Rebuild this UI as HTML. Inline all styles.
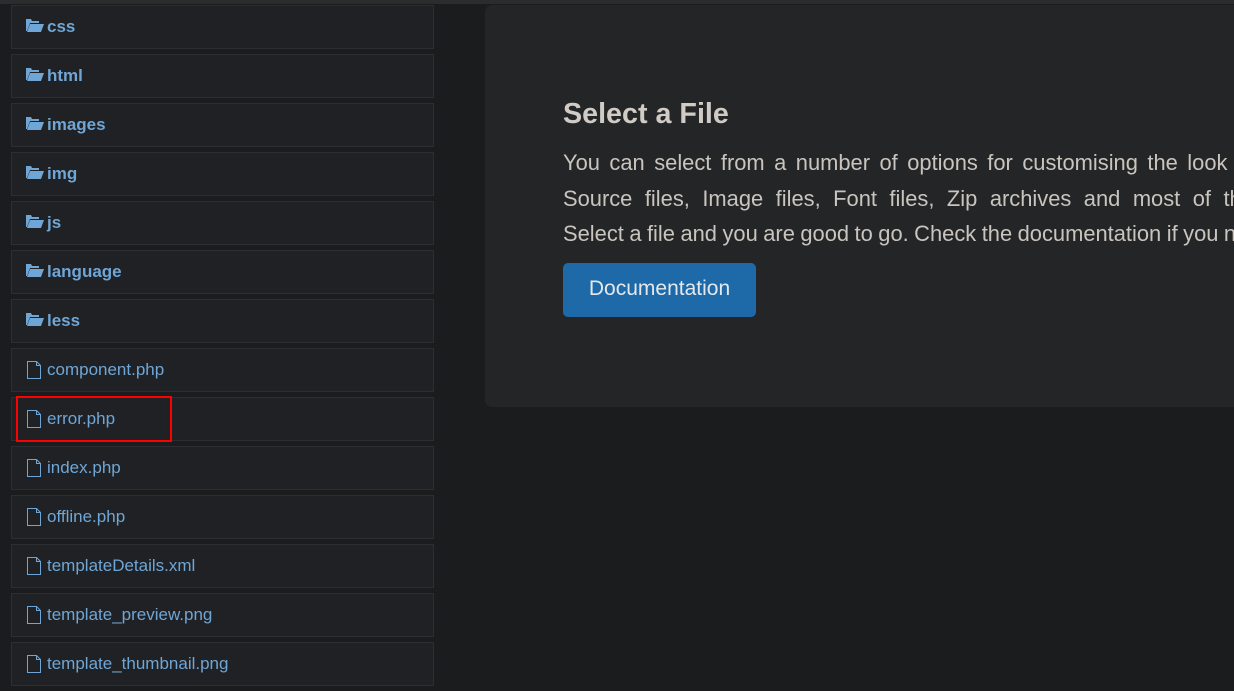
<!DOCTYPE html>
<html><head><style>
html,body{margin:0;overflow:hidden}
body{width:1234px;height:691px;background:#1b1c1e;font-family:"Liberation Sans",sans-serif;position:relative}
.top{position:absolute;left:0;top:0;width:1234px;height:4px;background:#2a2c2e}
.it{position:absolute;left:11px;width:421px;height:42px;background:#202124;border:1px solid #2c2e31;color:#6fa6d6;font-size:17px}
.it span{position:absolute;left:35px;top:11px}
.it svg{position:absolute;left:14px;top:12px}
.b span{font-weight:bold}
.panel{position:absolute;left:485px;top:5px;width:749px;height:402px;background:#242527;border-radius:7px 0 0 7px}
h1{position:absolute;left:563px;top:98px;margin:0;font-size:28.7px;color:#d0cbc5;font-weight:bold}
p{position:absolute;left:563px;top:145px;margin:0;font-size:21.9px;line-height:35.5px;color:#c9c4be;white-space:nowrap;width:671px;overflow:hidden}
.btn{position:absolute;left:563px;top:263px;width:193px;height:54px;background:#1e69a8;border-radius:5px;color:#e4e8ec;font-size:21px;text-align:center;line-height:52px}
.red{position:absolute;left:16px;top:396px;width:152px;height:42px;border:2px solid #f00}
</style></head><body>
<div class="top"></div>
<div class="it b" style="top:5px"><svg width="18" height="14" viewBox="0 0 18 14"><path d="M0 1h5l1 2h7v2H4L1 13H0z M4 6h14l-3 8H1z" fill="#6fa6d6"/></svg><span>css</span></div>
<div class="it b" style="top:54px"><svg width="18" height="14" viewBox="0 0 18 14"><path d="M0 1h5l1 2h7v2H4L1 13H0z M4 6h14l-3 8H1z" fill="#6fa6d6"/></svg><span>html</span></div>
<div class="it b" style="top:103px"><svg width="18" height="14" viewBox="0 0 18 14"><path d="M0 1h5l1 2h7v2H4L1 13H0z M4 6h14l-3 8H1z" fill="#6fa6d6"/></svg><span>images</span></div>
<div class="it b" style="top:152px"><svg width="18" height="14" viewBox="0 0 18 14"><path d="M0 1h5l1 2h7v2H4L1 13H0z M4 6h14l-3 8H1z" fill="#6fa6d6"/></svg><span>img</span></div>
<div class="it b" style="top:201px"><svg width="18" height="14" viewBox="0 0 18 14"><path d="M0 1h5l1 2h7v2H4L1 13H0z M4 6h14l-3 8H1z" fill="#6fa6d6"/></svg><span>js</span></div>
<div class="it b" style="top:250px"><svg width="18" height="14" viewBox="0 0 18 14"><path d="M0 1h5l1 2h7v2H4L1 13H0z M4 6h14l-3 8H1z" fill="#6fa6d6"/></svg><span>language</span></div>
<div class="it b" style="top:299px"><svg width="18" height="14" viewBox="0 0 18 14"><path d="M0 1h5l1 2h7v2H4L1 13H0z M4 6h14l-3 8H1z" fill="#6fa6d6"/></svg><span>less</span></div>
<div class="it" style="top:348px"><svg width="16" height="18" viewBox="0 0 16 18"><path d="M1.5 .5h9l4 4v13h-13z M10.5 .5v4h4" fill="none" stroke="#6fa6d6"/></svg><span>component.php</span></div>
<div class="it" style="top:397px"><svg width="16" height="18" viewBox="0 0 16 18"><path d="M1.5 .5h9l4 4v13h-13z M10.5 .5v4h4" fill="none" stroke="#6fa6d6"/></svg><span>error.php</span></div>
<div class="it" style="top:446px"><svg width="16" height="18" viewBox="0 0 16 18"><path d="M1.5 .5h9l4 4v13h-13z M10.5 .5v4h4" fill="none" stroke="#6fa6d6"/></svg><span>index.php</span></div>
<div class="it" style="top:495px"><svg width="16" height="18" viewBox="0 0 16 18"><path d="M1.5 .5h9l4 4v13h-13z M10.5 .5v4h4" fill="none" stroke="#6fa6d6"/></svg><span>offline.php</span></div>
<div class="it" style="top:544px"><svg width="16" height="18" viewBox="0 0 16 18"><path d="M1.5 .5h9l4 4v13h-13z M10.5 .5v4h4" fill="none" stroke="#6fa6d6"/></svg><span>templateDetails.xml</span></div>
<div class="it" style="top:593px"><svg width="16" height="18" viewBox="0 0 16 18"><path d="M1.5 .5h9l4 4v13h-13z M10.5 .5v4h4" fill="none" stroke="#6fa6d6"/></svg><span>template_preview.png</span></div>
<div class="it" style="top:642px"><svg width="16" height="18" viewBox="0 0 16 18"><path d="M1.5 .5h9l4 4v13h-13z M10.5 .5v4h4" fill="none" stroke="#6fa6d6"/></svg><span>template_thumbnail.png</span></div>
<div class="red"></div>
<div class="panel"></div>
<h1>Select a File</h1>
<p><span style="word-spacing:3.4px">You can select from a number of options for customising the look and feel of your template.</span><br><span style="word-spacing:6.4px">Source files, Image files, Font files, Zip archives and most of the common file types.</span><br><span style="word-spacing:-0.6px">Select a file and you are good to go. Check the documentation if you need help.</span></p>
<div class="btn">Documentation</div>
</body></html>
